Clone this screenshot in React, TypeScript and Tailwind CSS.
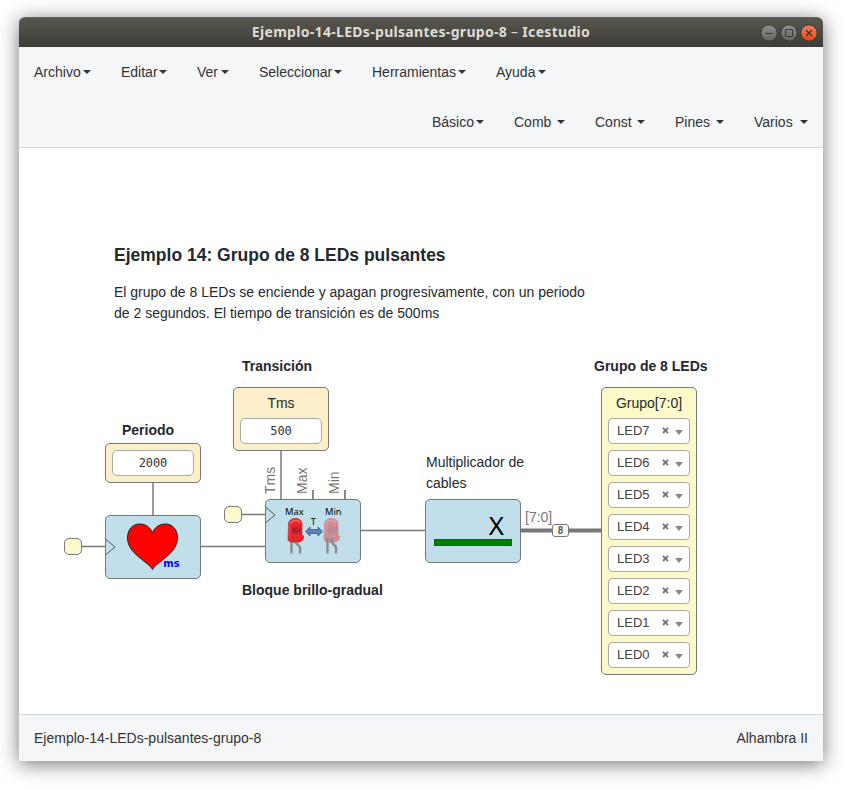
import type { ReactNode } from "react";

const Caret = () => (
  <span className="h-0 w-0 border-x-4 border-t-4 border-x-transparent border-t-[#333]" />
);

function MenuItem({ label, className }: { label: string; className: string }) {
  return (
    <button className={`box-content flex h-5 items-center justify-between p-[15px] ${className}`}>
      {label}
      <Caret />
    </button>
  );
}

function Node({ className, children }: { className: string; children?: ReactNode }) {
  return <div className={`absolute rounded-[5px] border border-[#777] ${className}`}>{children}</div>;
}

function Label({ className, children }: { className: string; children: ReactNode }) {
  return <div className={`absolute whitespace-nowrap leading-[21px] ${className}`}>{children}</div>;
}

function ValueBox({ value }: { value: string }) {
  return (
    <div className="flex h-[26px] w-[82px] items-center justify-center rounded-[5px] border border-[#aaa] bg-white font-['DejaVu_Sans_Mono',monospace] text-[12px] tracking-[-0.1px] text-[#333]">
      {value}
    </div>
  );
}

function LedSelect({ name }: { name: string }) {
  return (
    <div className="flex h-[26px] w-[82px] shrink-0 items-center rounded-[4px] border border-[#aaa] bg-white pl-2 text-[13px] text-[#444]">
      <span className="w-[45px] leading-[24px]">{name}</span>
      <svg width="7" height="7" viewBox="0 0 7 7" className="mb-[2px]">
        <path d="M1 1L6 6M6 1L1 6" stroke="#777" strokeWidth="1.9" />
      </svg>
      <svg width="8" height="5" viewBox="0 0 8 5" className="mt-[3px] ml-[6px]">
        <path d="M0 0H8L4 5Z" fill="#888" />
      </svg>
    </div>
  );
}

function Led({ x, faded = false }: { x: number; faded?: boolean }) {
  return (
    <g transform={`translate(${x} 0)`}>
      <g opacity={faded ? 0.45 : 1}>
        <path
          d="M1.500 24.500C1.500 20.500 4.500 18.500 8.500 18.500S15 20.500 15 24.500V34.500L16.500 36V38.500C15.500 41.500 12 42.500 8 42.500C4 42.500 1 41.500 1 39.500Z"
          fill="#e5262c"
          stroke="#c32a30"
          strokeWidth="0.7"
        />
        <path d="M3.500 24C4 22 6 20.500 8.500 20.500S12.500 21 13 23" fill="none" stroke="#f26568" strokeWidth="1.600" />
        <path d="M2.500 25V38" fill="none" stroke="#f04a4e" strokeWidth="1" />
        <path d="M5 27.500H13.500V33L10.500 32L8.500 33.500L5 33Z" fill="#a7222a" />
        <path d="M8.500 31.500L12 28.500" stroke="#d5252c" strokeWidth="1" />
      </g>
      <path
        d={faded ? "M4.500 38V53.500M9 38V42.500L13 47V53.500" : "M4.500 42V53.500M9 42V43L13 47V53.500"}
        fill="none"
        stroke="#8b8b8b"
        strokeWidth="2.400"
      />
    </g>
  );
}

const WindowControls = () => (
  <svg width="58" height="20" viewBox="0 0 58 20" fill="none">
    <defs>
      <linearGradient id="grey" x1="0" y1="0" x2="0" y2="1">
        <stop stopColor="#91908a" />
        <stop offset="1" stopColor="#64635d" />
      </linearGradient>
      <linearGradient id="orange" x1="0" y1="0" x2="0" y2="1">
        <stop stopColor="#f6845f" />
        <stop offset="1" stopColor="#dd4814" />
      </linearGradient>
    </defs>
    <circle cx="9" cy="10" r="8.2" fill="url(#grey)" stroke="#393832" />
    <circle cx="29" cy="10" r="8.2" fill="url(#grey)" stroke="#393832" />
    <circle cx="49" cy="10" r="8.2" fill="url(#orange)" stroke="#393832" />
    <path d="M5 10.5H13M25.5 6.5H32.5V13.5H25.5Z" stroke="#3c3b37" />
    <path d="M46 7L52 13M52 7L46 13" stroke="#49291c" strokeWidth="1.3" />
  </svg>
);

const Wires = () => (
  <svg className="absolute inset-0" width="804" height="566" viewBox="19 148 804 566" fill="none" stroke="#777">
    <path d="M82 546.5H105M201 546.5H265M242 514.5H265M361 530.5H425" strokeWidth="1.6" />
    <path d="M153 483V515M281 451V499" stroke="#999" strokeWidth="2" />
    <path d="M313 490V499M345 490V499" stroke="#888" strokeWidth="2" />
    <path d="M521 530.5H601" strokeWidth="4" />
  </svg>
);

const leds = ["LED7", "LED6", "LED5", "LED4", "LED3", "LED2", "LED1", "LED0"];

export default function App() {
  return (
    <div className="h-[789px] w-[846px] overflow-hidden bg-white pt-[17px] pl-[19px] font-['Liberation_Sans',Arial,sans-serif] text-[14px] text-[#333]">
      <div className="flex h-[744px] w-[804px] flex-col rounded-t-[6px] bg-white shadow-[0_3px_20px_rgba(0,0,0,0.55)]">
        <header className="grid h-[30px] shrink-0 grid-cols-[1fr_auto_1fr] items-center rounded-t-[6px] border-t border-[#66645a] bg-linear-to-b from-[#59574f] to-[#3d3c37] pr-[5px] pl-[5px]">
          <span className="col-start-2 pb-[2px] font-['Noto_Sans',sans-serif] text-[14px] leading-5 font-bold tracking-[0.31px] whitespace-nowrap text-[#dfdbd2]">
            Ejemplo-14-LEDs-pulsantes-grupo-8 <span className="font-normal">–</span> Icestudio
          </span>
          <div className="justify-self-end">
            <WindowControls />
          </div>
        </header>

        <nav className="h-[101px] shrink-0 border-b border-[#d3d7da] bg-[#f4f6f8]">
          <div className="flex h-[50px]">
            <MenuItem label="Archivo" className="w-[57px]" />
            <MenuItem label="Editar" className="w-[46px]" />
            <MenuItem label="Ver" className="w-[32px]" />
            <MenuItem label="Seleccionar" className="w-[83px]" />
            <MenuItem label="Herramientas" className="w-[94px]" />
            <MenuItem label="Ayuda" className="w-[50px]" />
          </div>
          <div className="flex h-[50px] justify-end">
            <MenuItem label="Básico" className="w-[52px]" />
            <MenuItem label="Comb" className="w-[51px]" />
            <MenuItem label="Const" className="w-[50px]" />
            <MenuItem label="Pines" className="w-[49px]" />
            <MenuItem label="Varios" className="w-[54px]" />
          </div>
        </nav>

        <main className="relative h-[566px] shrink-0 overflow-hidden bg-white text-[#24292e]">
          <Wires />

          <Label className="top-[97px] left-[95px]">
            <h1 className="mb-4 text-[17.5px] font-bold">Ejemplo 14: Grupo de 8 LEDs pulsantes</h1>
            <p>
              El grupo de 8 LEDs se enciende y apagan progresivamente, con un periodo
              <br />
              de 2 segundos. El tiempo de transición es de 500ms
            </p>
          </Label>
          <Label className="top-[208px] left-[223px] font-bold">Transición</Label>
          <Label className="top-[208px] left-[575px] font-bold">Grupo de 8 LEDs</Label>
          <Label className="top-[272px] left-[103px] font-bold">Periodo</Label>
          <Label className="top-[432px] left-[223px] font-bold">Bloque brillo-gradual</Label>
          <Label className="top-[304px] left-[407px]">
            Multiplicador de
            <br />
            cables
          </Label>

          <Node className="top-[295px] left-[86px] flex h-[40px] w-[96px] items-center justify-center bg-[#fcefca]">
            <ValueBox value="2000" />
          </Node>

          <Node className="top-[239px] left-[214px] flex h-[64px] w-[96px] flex-col items-center bg-[#fcefca] pt-[5px]">
            <span className="mb-[5px] leading-5">Tms</span>
            <ValueBox value="500" />
          </Node>

          <Node className="top-[390px] left-[45px] h-[17px] w-[18px] bg-[#fcfac9]" />
          <Node className="top-[358px] left-[205px] h-[17px] w-[18px] bg-[#fcfac9]" />

          <Node className="top-[367px] left-[86px] h-[64px] w-[96px] bg-[#c0dfeb]">
            <svg className="block" width="94" height="62" viewBox="106 516 94 62">
              <path
                d="M152.500 569.500C149 562 127.500 554 127.500 538C127.500 529 133 524 139.500 524C146 524 150.500 527.500 152.500 533C154.500 527.500 159 524 165.500 524C172 524 177.500 529 177.500 538C177.500 554 156 562 152.500 569.500Z"
                fill="red"
                stroke="#222"
              />
              <path d="M106 539.500L115 547L106 554.500" fill="none" stroke="#555" />
              <text x="163.300" y="567" fill="#00f" className="font-['DejaVu_Sans',sans-serif] text-[10px] font-bold">
                ms
              </text>
            </svg>
          </Node>

          <Node className="top-[351px] left-[246px] h-[64px] w-[96px] bg-[#c0dfeb]">
            <svg className="block" width="94" height="62">
              <path d="M0 7.500L9 15L0 22.500" fill="none" stroke="#555" />
              <Led x={21} />
              <Led x={57} faded />
              <path
                d="M39.500 31.500L44 27V29.500H52V27L56.500 31.500L52 36V33.500H44V36Z"
                fill="#5f7fb8"
                stroke="#3d557a"
                strokeWidth="0.8"
              />
              <g className="font-['Noto_Sans',sans-serif] text-[9.3px]" fill="#000">
                <text x="19" y="15">
                  Max
                </text>
                <text x="59" y="15">
                  Min
                </text>
                <text x="44.700" y="25">
                  T
                </text>
              </g>
            </svg>
          </Node>

          <div className="absolute top-[306px] left-[241px] flex h-[40px] items-start gap-[11px] leading-[21px] text-[#777]">
            <span className="h-[40px] w-[21px] rotate-180 [writing-mode:vertical-rl]">Tms</span>
            <span className="h-[40px] w-[21px] rotate-180 [writing-mode:vertical-rl]">Max</span>
            <span className="h-[40px] w-[21px] rotate-180 [writing-mode:vertical-rl]">Min</span>
          </div>

          <Node className="top-[351px] left-[406px] flex h-[64px] w-[96px] flex-col bg-[#c0dfeb] px-[8px] pt-[11px]">
            <span className="self-end pr-[8px] font-['Noto_Sans',sans-serif] text-[26px] leading-[28px] text-black">X</span>
            <span className="h-[7px] border border-[#146414] bg-[green]" />
          </Node>
          <Label className="top-[359px] left-[506px] text-[#777]">[7:0]</Label>
          <div className="absolute top-[376px] left-[533px] flex h-[13px] w-[17px] items-center justify-center rounded-[3px] border border-[#777] bg-white font-['DejaVu_Sans_Mono',monospace] text-[10px] font-bold text-[#555]">
            8
          </div>

          <Node className="top-[239px] left-[582px] flex h-[288px] w-[96px] flex-col items-center gap-[6px] bg-[#fcfac9] pt-[5px]">
            <span className="-mb-px leading-5">Grupo[7:0]</span>
            {leds.map((name) => (
              <LedSelect key={name} name={name} />
            ))}
          </Node>
        </main>

        <footer className="flex h-[47px] shrink-0 items-center justify-between border-t border-[#d0d7dc] bg-[#f4f6f8] px-[15px]">
          <span>Ejemplo-14-LEDs-pulsantes-grupo-8</span>
          <span>Alhambra II</span>
        </footer>
      </div>
    </div>
  );
}
